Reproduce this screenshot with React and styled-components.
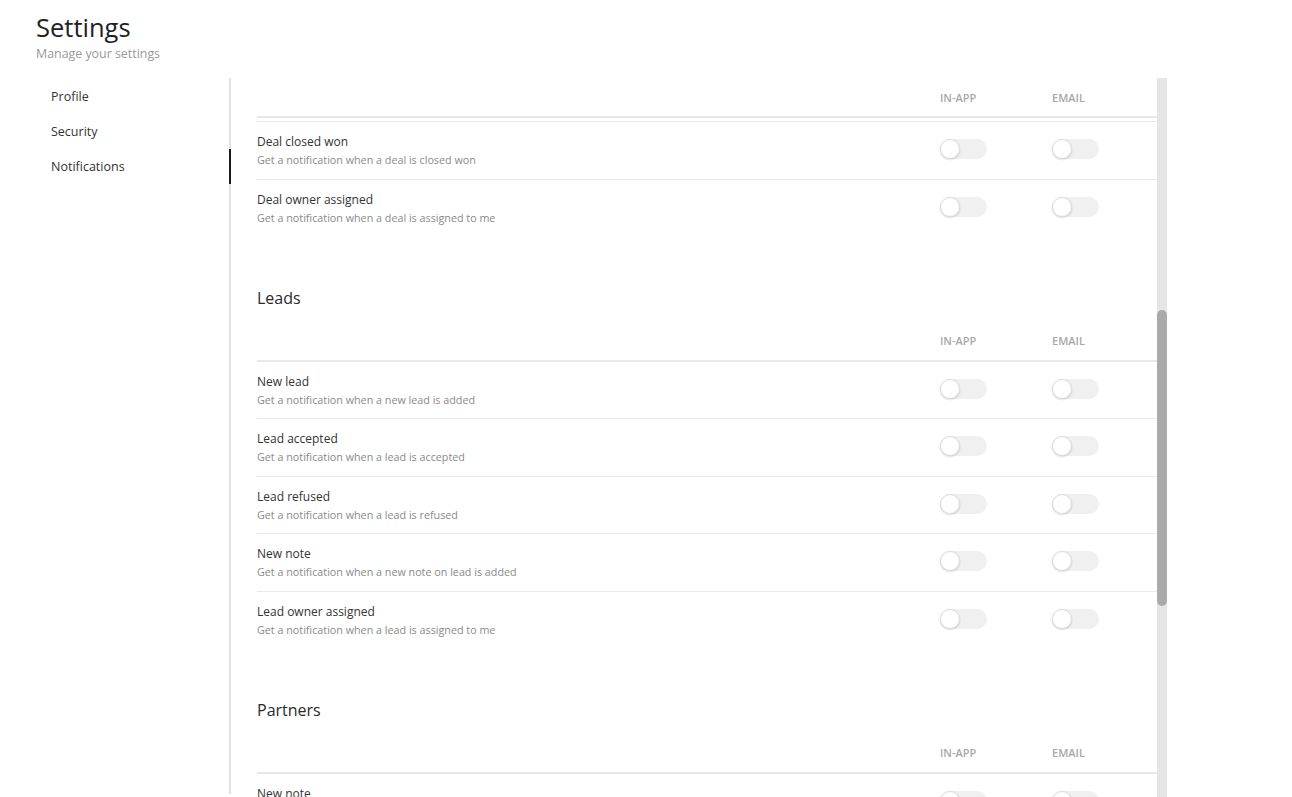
import React, { useLayoutEffect, useRef, useState } from 'react';
import styled, { createGlobalStyle } from 'styled-components';

const sections = [
  {
    title: 'Contacts',
    rows: [
      ['New contact', 'Get a notification when a new contact is added'],
      ['Contact updated', 'Get a notification when a contact is updated'],
      ['New note', 'Get a notification when a new note on contact is added'],
      ['Contact owner assigned', 'Get a notification when a contact is assigned to me']
    ]
  },
  {
    title: 'Deals',
    rows: [
      ['New deal', 'Get a notification when a new deal is added'],
      ['Deal stage changed', 'Get a notification when a deal changes stage'],
      ['Deal closed lost', 'Get a notification when a deal is closed lost'],
      ['Deal closed won', 'Get a notification when a deal is closed won'],
      ['Deal owner assigned', 'Get a notification when a deal is assigned to me']
    ]
  },
  {
    title: 'Leads',
    rows: [
      ['New lead', 'Get a notification when a new lead is added'],
      ['Lead accepted', 'Get a notification when a lead is accepted'],
      ['Lead refused', 'Get a notification when a lead is refused'],
      ['New note', 'Get a notification when a new note on lead is added'],
      ['Lead owner assigned', 'Get a notification when a lead is assigned to me']
    ]
  },
  {
    title: 'Partners',
    rows: [
      ['New note', 'Get a notification when a new note on partner is added'],
      ['New partner', 'Get a notification when a new partner is added'],
      ['Partner updated', 'Get a notification when a partner is updated'],
      ['Partner accepted', 'Get a notification when a partner is accepted'],
      ['Partner refused', 'Get a notification when a partner is refused'],
      ['New deal registration', 'Get a notification when a partner registers a deal'],
      ['New lead submitted', 'Get a notification when a partner submits a lead'],
      ['Partner owner assigned', 'Get a notification when a partner is assigned to me']
    ]
  }
];

const Toggle = ({ on }) => (
  <Track on={on}>
    <Knob on={on} />
  </Track>
);

export default function App() {
  const scrollRef = useRef(null);
  const leadsRef = useRef(null);
  const [thumb, setThumb] = useState({ top: 0, height: 0 });

  const updateThumb = () => {
    const el = scrollRef.current;
    if (!el) return;
    const track = el.clientHeight;
    setThumb({
      top: (el.scrollTop / el.scrollHeight) * track,
      height: (el.clientHeight / el.scrollHeight) * track
    });
  };

  useLayoutEffect(() => {
    // keep the view where the Leads title sits ~208px below the top
    if (scrollRef.current && leadsRef.current) {
      scrollRef.current.scrollTop = leadsRef.current.offsetTop - 208;
    }
    updateThumb();
  }, []);

  return (
    <Page>
      <GlobalStyle />
      <Header>
        <Title>Settings</Title>
        <Subtitle>Manage your settings</Subtitle>
      </Header>
      <Main>
        <Sidebar>
          <NavItem>Profile</NavItem>
          <NavItem>Security</NavItem>
          <NavItem active>Notifications</NavItem>
        </Sidebar>
        <Scroller ref={scrollRef} onScroll={updateThumb}>
          <Inner>
            {sections.map(section => (
              <Section key={section.title}>
                <SectionTitle ref={section.title === 'Leads' ? leadsRef : null}>
                  {section.title}
                </SectionTitle>
                <div>
                  <HeadRow>
                    <span />
                    <HeadCell>In-app</HeadCell>
                    <HeadCell>Email</HeadCell>
                  </HeadRow>
                  {section.rows.map(([name, desc]) => (
                    <Row key={name}>
                      <div>
                        <RowName>{name}</RowName>
                        <RowDesc>{desc}</RowDesc>
                      </div>
                      <Toggle />
                      <Toggle />
                    </Row>
                  ))}
                </div>
              </Section>
            ))}
          </Inner>
        </Scroller>
        <ScrollTrack>
          <ScrollThumb style={{ marginTop: thumb.top, height: thumb.height }} />
        </ScrollTrack>
      </Main>
    </Page>
  );
}

const GlobalStyle = createGlobalStyle`
  html, body {
    margin: 0;
    padding: 0;
    overflow: hidden;
    background: #fff;
  }
  body {
    font-family: 'Open Sans', 'Noto Sans', sans-serif;
    color: #333;
  }
`;

const Page = styled.div`
  height: 797px;
  display: flex;
  flex-direction: column;
`;

const Header = styled.header`
  padding: 12px 36px 0;
  height: 66px;
  box-sizing: border-box;
`;

const Title = styled.h1`
  margin: 0;
  font-size: 25.5px;
  line-height: 30px;
  font-weight: 400;
  color: #222;
`;

const Subtitle = styled.div`
  margin-top: 3px;
  font-size: 12.4px;
  line-height: 18px;
  color: #999;
`;

const Main = styled.div`
  display: flex;
  margin-top: 12px;
  padding-left: 36px;
  height: 719px;
`;

const Sidebar = styled.nav`
  width: 193px;
  height: 715px;
  padding-top: 1px;
  border-right: 2px solid #e2e2e2;
  display: flex;
  flex-direction: column;
`;

const NavItem = styled.div`
  height: 35px;
  line-height: 35px;
  padding-left: 15px;
  font-size: 12.5px;
  color: #333;
  margin-right: -2px;
  border-right: 2px solid ${p => (p.active ? '#1a1a1a' : 'transparent')};
`;

const Scroller = styled.div`
  width: 926px;
  height: 719px;
  overflow-y: scroll;
  scrollbar-width: none;

  &::-webkit-scrollbar {
    display: none;
  }
`;

const Inner = styled.div`
  position: relative;
  padding: 5px 0 27px 26px;
`;

const ScrollTrack = styled.div`
  width: 10px;
  height: 719px;
  background: #e5e5e5;
  display: flex;
  flex-direction: column;
`;

const ScrollThumb = styled.div`
  width: 10px;
  border-radius: 5px;
  background: #aaaaaa;
`;

const Section = styled.section`
  & + & {
    margin-top: 48.5px;
  }
`;

const SectionTitle = styled.h3`
  margin: 0 0 12px;
  font-size: 16px;
  line-height: 24px;
  font-weight: 400;
  color: #2a2a2a;
`;

const HeadRow = styled.div`
  position: sticky;
  top: 0;
  z-index: 1;
  background: #fff;
  height: 40px;
  box-sizing: border-box;
  border-bottom: 2px solid #e8e8e8;
  display: grid;
  grid-template-columns: 1fr 112px 105px;
  align-items: center;
`;

const HeadCell = styled.span`
  font-size: 11px;
  font-weight: 600;
  text-transform: uppercase;
  color: #a8a8a8;
`;

const Row = styled.div`
  height: 57.5px;
  box-sizing: border-box;
  padding-top: 11px;
  border-bottom: 1px solid #e9e9e9;
  display: grid;
  grid-template-columns: 1fr 112px 105px;
  align-items: start;

  &:last-child {
    border-bottom: none;
  }
`;

const RowName = styled.div`
  font-size: 12px;
  line-height: 18px;
  color: #333;
`;

const RowDesc = styled.div`
  margin-top: 1px;
  font-size: 10.75px;
  line-height: 16px;
  color: #8a8a8a;
`;

const Track = styled.div`
  position: relative;
  margin-top: 6px;
  width: 47px;
  height: 20px;
  border-radius: 10px;
  background: ${p => (p.on ? '#333' : '#f0f0f0')};
`;

const Knob = styled.div`
  position: absolute;
  top: 0;
  left: ${p => (p.on ? '27px' : '0')};
  width: 20px;
  height: 20px;
  box-sizing: border-box;
  border-radius: 50%;
  background: #fff;
  border: 1px solid #dcdcdc;
  box-shadow: 0 1px 2px rgba(0, 0, 0, 0.15);
`;
